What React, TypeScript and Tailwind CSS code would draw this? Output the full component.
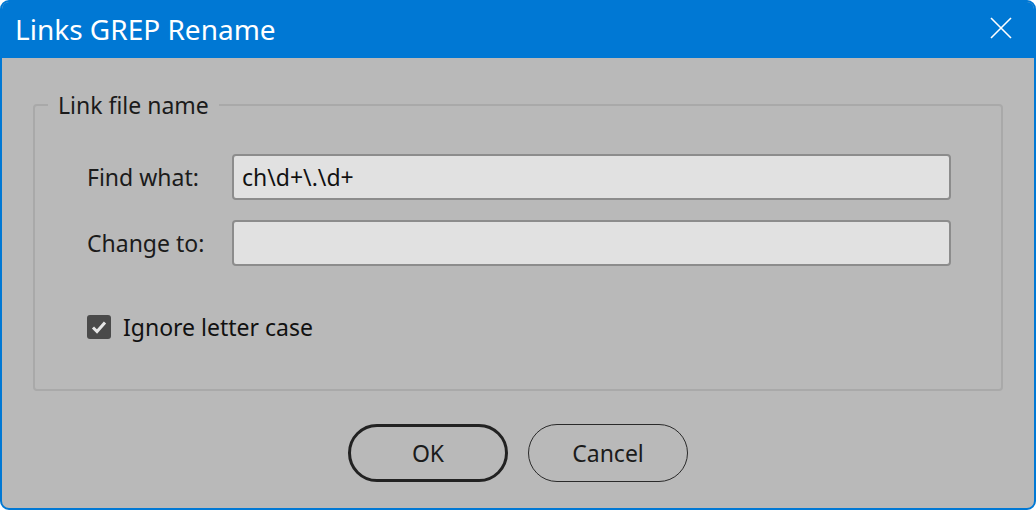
import { useState } from "react";

const font = { fontFamily: '"Noto Sans", "Open Sans", sans-serif' };

const Field = ({ label, value }: { label: string; value: string }) => (
  <div className="flex items-center">
    <label className="w-[145px] text-[23px] text-[#1b1b1b]">{label}</label>
    <div className="w-[719px] h-[46px] bg-[#e1e1e1] border-2 border-[#8c8c8c] rounded-[4px] flex items-center px-[8px] text-[23px] text-[#111]">
      {value}
    </div>
  </div>
);

export default function App() {
  const [ignoreCase, setIgnoreCase] = useState(true);

  return (
    <div className="w-[1036px] h-[510px]" style={font}>
      <div className="w-full h-full border-2 border-[#0078d4] rounded-[9px] overflow-hidden bg-[#b9b9b9] flex flex-col">
        {/* Title bar */}
        <div className="h-[56px] bg-[#0078d4] flex items-center justify-between pl-[13px] pr-[22px] shrink-0">
          <span className="text-[28px] text-white leading-none pb-[2px]">Links GREP Rename</span>
          <svg width="22" height="22" viewBox="0 0 22 22" className="mb-[4px]">
            <path d="M1 1 L21 21 M21 1 L1 21" stroke="white" strokeWidth="1.6" />
          </svg>
        </div>

        {/* Group box */}
        <fieldset className="mx-[31px] mt-[32px] h-[301px] border-2 border-[#a9a9a9] rounded-[4px]">
          <legend className="ml-[13px] px-[10px] text-[23px] text-[#1b1b1b] leading-[30px]">Link file name</legend>
          <div className="pl-[52px]">
            <div className="flex flex-col gap-[20px] mt-[34px]">
              <Field label="Find what:" value="ch\d+\.\d+" />
              <Field label="Change to:" value="" />
            </div>
            <label
              className="flex items-center gap-[12px] mt-[44px] text-[23px] text-[#111] cursor-pointer w-fit"
              onClick={() => setIgnoreCase(!ignoreCase)}
            >
              <span className="w-[24px] h-[24px] rounded-[3px] bg-[#4a4a4a] flex items-center justify-center">
                {ignoreCase && (
                  <svg width="16" height="14" viewBox="0 0 16 14">
                    <path d="M2 7.5 L6 11.5 L14 2.5" stroke="#e6e6e6" strokeWidth="3" fill="none" />
                  </svg>
                )}
              </span>
              Ignore letter case
            </label>
          </div>
        </fieldset>

        {/* Buttons */}
        <div className="flex justify-center gap-[20px] mt-[33px]">
          <button className="w-[160px] h-[58px] rounded-full border-[3px] border-[#222] text-[23px] text-[#1b1b1b]">
            OK
          </button>
          <button className="w-[160px] h-[58px] rounded-full border-[1.5px] border-[#2a2a2a] text-[23px] text-[#1b1b1b]">
            Cancel
          </button>
        </div>
      </div>
    </div>
  );
}
